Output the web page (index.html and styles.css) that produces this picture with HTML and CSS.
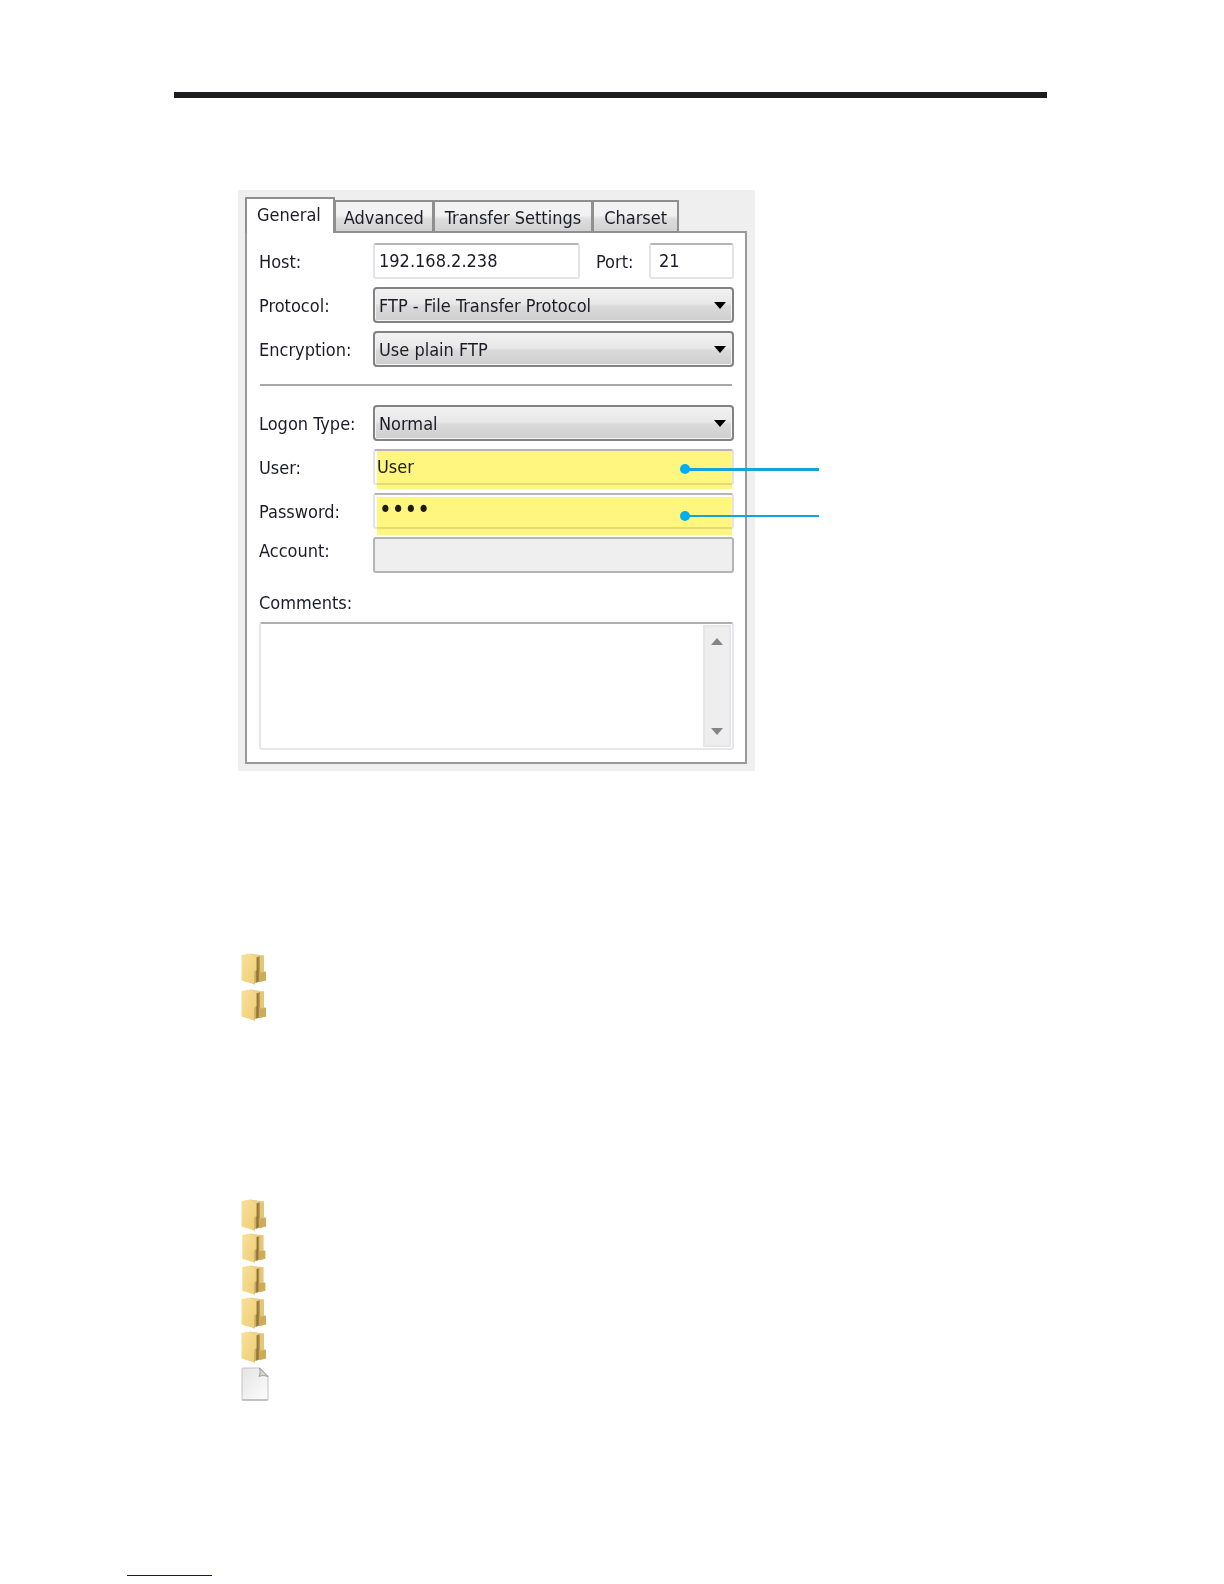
FILE: index.html
```html
<!DOCTYPE html>
<html lang="en">
<head>
<meta charset="utf-8">
<title>FTP site settings</title>
<link rel="stylesheet" href="styles.css">
</head>
<body>
<svg class="defs" aria-hidden="true">
  <defs>
    <linearGradient id="front" x1="0" y1="0" x2="1" y2="1">
      <stop offset="0" stop-color="#f8e09c"/><stop offset="1" stop-color="#efcd72"/>
    </linearGradient>
    <linearGradient id="inside" x1="0" y1="0" x2="1" y2="0">
      <stop offset="0" stop-color="#a88c4c"/><stop offset=".5" stop-color="#8f7439"/><stop offset="1" stop-color="#c4a55a"/>
    </linearGradient>
    <linearGradient id="paper" x1="0" y1="0" x2="1" y2="1">
      <stop offset="0" stop-color="#e4e4e4"/><stop offset="1" stop-color="#fdfdfd"/>
    </linearGradient>
    <symbol id="folder" viewBox="0 0 26 32">
      <path d="M9 .5 23 2.500V27.500L14 30 10 26Z" fill="#ecd08a"/>
      <path d="M14.500 5 19 3v25l-4.500 2Z" fill="url(#inside)"/>
      <path d="M19 3 23 2.500V18l2 1v8.500l-6 1.500Z" fill="#e3c67c"/>
      <path d="M18 19.500 25 19v8.500l-7 1.500Z" fill="#cdab59"/>
      <path d="M.5 2 9 .5 15.500 5V17l-2 2v12.500L.5 27.500Z" fill="url(#front)"/>
      <path d="M15.500 5V17l-2 2v12.500" stroke="#c9aa5c" stroke-width=".7" fill="none"/>
    </symbol>
    <symbol id="file" viewBox="0 0 28 34">
      <path d="M2 1h17l8 8.500V32q0 1-1 1H2q-1 0-1-1V2q0-1 1-1Z" fill="url(#paper)" stroke="#c4c4c4"/>
      <path d="M1 33h26" stroke="#a5a5a5" fill="none"/>
      <path d="M18.500 1c1 3.500.5 6-.5 8.500 3-1.500 6-1 9 0Z" fill="#d4d4d4"/>
      <path d="M18 9.500C19 7 19.500 4.500 18.500 1L27 9.500c-3-1-6-1.500-9 0Z" stroke="#8c8c8c" stroke-width=".8" fill="none"/>
    </symbol>
  </defs>
</svg>
<main class="page">
  <hr class="page-rule">
  <section class="figure">
    <form class="dialog">
      <div class="tabs" role="tablist">
        <button type="button" role="tab" class="tab tab-active" aria-selected="true">General</button>
        <button type="button" role="tab" class="tab">Advanced</button>
        <button type="button" role="tab" class="tab tab-wide">Transfer Settings</button>
        <button type="button" role="tab" class="tab tab-wide">Charset</button>
      </div>
      <div class="panel">
        <div class="row">
          <label for="host">Host:</label>
          <div class="host">
            <input id="host" class="field" type="text" value="192.168.2.238">
            <label for="port">Port:</label>
            <input id="port" class="field port" type="text" value="21">
          </div>
        </div>
        <div class="row">
          <label for="protocol">Protocol:</label>
          <div class="combo">
            <select id="protocol"><option>FTP - File Transfer Protocol</option></select>
            <svg class="arrow" viewBox="0 0 12 7"><path d="M0 0h12L6 7Z"/></svg>
          </div>
        </div>
        <div class="row">
          <label for="encryption">Encryption:</label>
          <div class="combo">
            <select id="encryption"><option>Use plain FTP</option></select>
            <svg class="arrow" viewBox="0 0 12 7"><path d="M0 0h12L6 7Z"/></svg>
          </div>
        </div>
        <hr class="divider">
        <div class="row">
          <label for="logon">Logon Type:</label>
          <div class="combo">
            <select id="logon"><option>Normal</option></select>
            <svg class="arrow" viewBox="0 0 12 7"><path d="M0 0h12L6 7Z"/></svg>
          </div>
        </div>
        <div class="row">
          <label for="user">User:</label>
          <div class="marked">
            <input id="user" class="field user" type="text" value="User">
            <span class="callout callout-thick"></span>
          </div>
        </div>
        <div class="row">
          <label for="password">Password:</label>
          <div class="marked marked-low">
            <input id="password" class="field password" type="password" value="user">
            <span class="callout"></span>
          </div>
        </div>
        <div class="row row-account">
          <label for="account">Account:</label>
          <input id="account" class="field" type="text" disabled>
        </div>
        <label class="comments-label" for="comments">Comments:</label>
        <div class="comments">
          <textarea id="comments"></textarea>
          <div class="scrollbar">
            <svg class="scroll-arrow" viewBox="0 0 12 7"><path d="M0 7h12L6 0Z"/></svg>
            <svg class="scroll-arrow" viewBox="0 0 12 7"><path d="M0 0h12L6 7Z"/></svg>
          </div>
        </div>
      </div>
    </form>
  </section>
  <section class="icons icons-first">
    <svg class="folder"><use href="#folder"/></svg>
    <svg class="folder"><use href="#folder"/></svg>
  </section>
  <section class="icons icons-second">
    <svg class="folder"><use href="#folder"/></svg>
    <svg class="folder folder-short"><use href="#folder"/></svg>
    <svg class="folder folder-short"><use href="#folder"/></svg>
    <svg class="folder"><use href="#folder"/></svg>
    <svg class="folder"><use href="#folder"/></svg>
    <svg class="file"><use href="#file"/></svg>
  </section>
</main>
<footer class="footer"><hr class="footer-line"></footer>
</body>
</html>
```
FILE: styles.css
```css
* { box-sizing: border-box; }
body {
  margin: 0;
  background: #fff;
  color: #1c1c28;
  font: 18px/24px "DejaVu Sans Condensed", "DejaVu Sans", sans-serif;
}
.defs { position: absolute; width: 0; height: 0; }
hr { margin: 0; border: 0; }
input, select, textarea, button { font: inherit; color: inherit; margin: 0; }
.page { padding: 92px 177px 0 174px; }
.page-rule { height: 6px; background: #1c1c1e; }
.figure { padding: 92px 0 0 64px; }
.dialog {
  width: 517px;
  padding: 7px 8px 7px 7px;
  background: #efefef;
}
.tabs { display: flex; align-items: flex-end; }
.tab {
  height: 33px;
  margin-bottom: -2px;
  padding: 2px 8px 0;
  border: 2px solid #8f8f8f;
  border-left-width: 1px;
  background: linear-gradient(#f2f2f2 45%, #dcdcdc 60%, #d2d2d2);
  white-space: nowrap;
}
.tab-wide { padding: 2px 10px 0; }
.tab-active {
  position: relative;
  height: 36px;
  padding: 0 12px 2px 10px;
  border: 2px solid #8f8f8f;
  border-bottom: 0;
  background: #fff;
}
.panel {
  padding: 10px 11px 12px 12px;
  border: 2px solid #999;
  background: #fff;
}
.row {
  display: grid;
  grid-template-columns: 114px 1fr;
  align-items: center;
  min-height: 36px;
  margin-bottom: 8px;
}
.row > label { padding-top: 2px; }
.host { display: grid; grid-template-columns: 207px 1fr 85px; }
.host label { padding: 7px 0 0 16px; }
.field {
  display: block;
  width: 100%;
  height: 36px;
  padding: 0 4px 2px;
  border: 2px solid #e3e3e8;
  border-top-color: #b5b5b8;
  border-radius: 3px;
  background: #fff;
}
.port { padding-left: 8px; }
.user { padding-left: 2px; }
.password { font-size: 24px; }
.field:disabled { border-color: #b5b5b5; background: #efefef; }
.combo { position: relative; }
select {
  appearance: none;
  display: block;
  width: 100%;
  height: 36px;
  padding: 1px 30px 0 4px;
  border: 2px solid #828282;
  border-radius: 4px;
  background: linear-gradient(#f2f2f2, #e8e8e8 45%, #dadada 55%, #cecece);
  box-shadow: inset 0 0 0 1px #f4f4f4;
}
.arrow { position: absolute; top: 15px; right: 8px; width: 12px; height: 7px; }
.divider { height: 2px; margin: 17px 2px 19px 1px; background: #a8a8a8; }
.marked { position: relative; }
.marked::before {
  content: "";
  position: absolute;
  inset: 2px 2px -4px 4px;
  background: #fff67f;
  mix-blend-mode: multiply;
  pointer-events: none;
}
.marked-low::before { inset: 4px 2px -6px 4px; }
.callout {
  position: absolute;
  top: 22px;
  left: 312px;
  width: 134px;
  height: 2px;
  background: #12a5dc;
}
.callout-thick { top: 19px; height: 3px; }
.callout::before {
  content: "";
  position: absolute;
  top: -4px;
  left: -5px;
  width: 10px;
  height: 10px;
  border-radius: 50%;
  background: #00aeef;
}
.row-account > label { padding: 0 0 8px; }
.comments-label { display: block; margin: 18px 0 7px; }
.comments {
  display: flex;
  height: 128px;
  padding: 1px;
  border: 2px solid #e6e6ee;
  border-top-color: #b0b0b0;
  border-radius: 3px;
}
textarea {
  flex: 1;
  min-width: 0;
  border: 0;
  resize: none;
  background: transparent;
}
.scrollbar {
  display: flex;
  flex-direction: column;
  justify-content: space-between;
  align-items: center;
  width: 28px;
  padding: 11px 0 10px;
  border: 2px solid #e6e6e6;
  background: #eee;
}
.scroll-arrow { width: 12px; height: 7px; fill: #858585; }
.icons {
  display: flex;
  flex-direction: column;
  gap: 4px;
  padding-left: 67px;
}
.icons-first { padding-top: 182px; }
.icons-second { padding-top: 178px; gap: 2px; }
.folder { width: 26px; height: 32px; }
.folder-short { height: 30px; }
.file { width: 28px; height: 34px; margin-top: 2px; }
.footer { padding: 174px 0 8px 127px; }
.footer-line { width: 85px; height: 1px; background: #10107c; }
```
